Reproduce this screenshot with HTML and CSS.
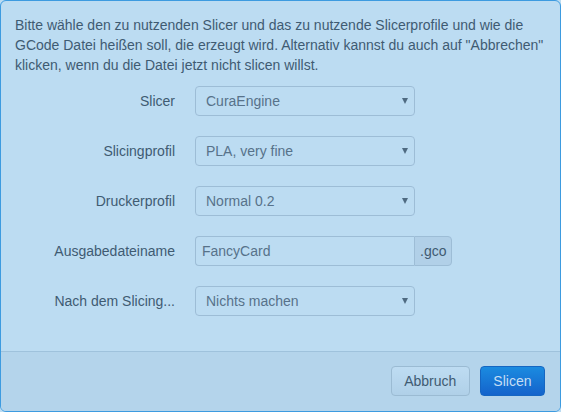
FILE: index.html
```html
<!DOCTYPE html>
<html lang="de">
<head>
<meta charset="utf-8">
<title>Slicing</title>
<link rel="stylesheet" href="styles.css">
</head>
<body>
<div class="modal">
  <div class="modal-body">
    <p class="intro">Bitte wähle den zu nutzenden Slicer und das zu nutzende Slicerprofile und wie die GCode Datei heißen soll, die erzeugt wird. Alternativ kannst du auch auf "Abbrechen" klicken, wenn du die Datei jetzt nicht slicen willst.</p>
    <form class="form">
      <div class="group">
        <label class="label">Slicer</label>
        <div class="controls"><span class="select-wrap"><select class="select"><option>CuraEngine</option></select></span></div>
      </div>
      <div class="group">
        <label class="label">Slicingprofil</label>
        <div class="controls"><span class="select-wrap"><select class="select"><option>PLA, very fine</option></select></span></div>
      </div>
      <div class="group">
        <label class="label">Druckerprofil</label>
        <div class="controls"><span class="select-wrap"><select class="select"><option>Normal 0.2</option></select></span></div>
      </div>
      <div class="group">
        <label class="label">Ausgabedateiname</label>
        <div class="controls"><div class="append"><input class="input" type="text" value="FancyCard"><span class="addon">.gco</span></div></div>
      </div>
      <div class="group">
        <label class="label">Nach dem Slicing...</label>
        <div class="controls"><span class="select-wrap"><select class="select"><option>Nichts machen</option></select></span></div>
      </div>
    </form>
  </div>
  <div class="modal-footer">
    <button class="btn" type="button">Abbruch</button>
    <button class="btn btn-primary" type="button">Slicen</button>
  </div>
</div>
</body>
</html>
```
FILE: styles.css
```css
html, body {
  margin: 0;
  padding: 0;
  background: #bcdcf2;
}
body {
  font-family: "Liberation Sans", Arial, sans-serif;
  font-size: 14px;
  line-height: 20px;
  color: #3f5b72;
}
.modal {
  box-sizing: border-box;
  width: 561px;
  height: 412px;
  border: 1px solid #3d9be0;
  border-radius: 6px;
  background: #bcdcf2;
  overflow: hidden;
  display: flex;
  flex-direction: column;
}
.modal-body {
  padding: 14px 14px 15px 14px;
  flex: 1;
}
.intro {
  margin: 0 0 11px 0;
}
.form {
  margin: 0;
}
.group {
  display: flex;
  margin-bottom: 20px;
  height: 30px;
}
.label {
  width: 160px;
  text-align: right;
  padding-top: 5px;
  line-height: 20px;
  color: #3f5b72;
}
.controls {
  margin-left: 20px;
}
.select-wrap {
  position: relative;
  display: inline-block;
}
.select-wrap::after {
  content: "";
  position: absolute;
  right: 7px;
  top: 12px;
  border-left: 3px solid transparent;
  border-right: 3px solid transparent;
  border-top: 6px solid #4f6b82;
  pointer-events: none;
}
.select {
  -webkit-appearance: none;
  appearance: none;
  box-sizing: border-box;
  width: 220px;
  height: 30px;
  padding: 0 10px;
  margin: 0;
  border: 1px solid #9dbdd6;
  border-radius: 4px;
  background: #bcdcf2;
  font-family: "Liberation Sans", Arial, sans-serif;
  font-size: 14px;
  color: #57728a;
}
.append {
  display: flex;
}
.input {
  box-sizing: border-box;
  width: 219px;
  height: 30px;
  margin: 0;
  padding: 4px 6px;
  border: 1px solid #9dbdd6;
  border-right: none;
  border-radius: 4px 0 0 4px;
  background: #bcdcf2;
  font-family: "Liberation Sans", Arial, sans-serif;
  font-size: 14px;
  color: #57728a;
}
.addon {
  box-sizing: border-box;
  height: 30px;
  padding: 4px 5px;
  border: 1px solid #9dbdd6;
  border-radius: 0 4px 4px 0;
  background: #b1d0e8;
  color: #3f5b72;
  line-height: 20px;
}
.modal-footer {
  border-top: 1px solid #9fc2dc;
  background: #b4d4eb;
  padding: 14px 15px 15px;
  display: flex;
  justify-content: flex-end;
  gap: 10px;
}
.btn {
  box-sizing: border-box;
  height: 30px;
  padding: 4px 12.5px;
  border: 1px solid #9bbbd3;
  border-radius: 4px;
  background: linear-gradient(#bedcf2, #b0d0e8);
  font-family: "Liberation Sans", Arial, sans-serif;
  font-size: 14px;
  line-height: 20px;
  color: #3f5b72;
}
.btn-primary {
  border-color: #1566c2;
  background: linear-gradient(#1b8be0, #1463cb);
  color: #c6def4;
}
```
